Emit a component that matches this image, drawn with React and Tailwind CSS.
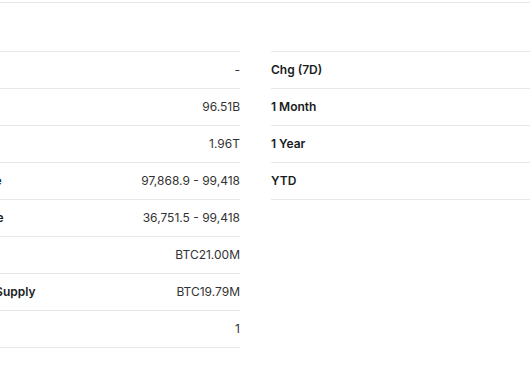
import React from "react";

const left = [
  ["Prev. Close", "-"],
  ["Volume", "96.51B"],
  ["Market Cap", "1.96T"],
  ["Day's Range", "97,868.9 - 99,418"],
  ["52 wk Range", "36,751.5 - 99,418"],
  ["Max Supply", "BTC21.00M"],
  ["Circulating Supply", "BTC19.79M"],
  ["Rank", "1"],
];

const right = [
  ["Chg (7D)", "+8.12%"],
  ["1 Month", "+42.19%"],
  ["1 Year", "+167.45%"],
  ["YTD", "+135.08%"],
];

function Row({ label, value }) {
  return (
    <div className="flex h-[37px] items-center justify-between border-b border-[#e6e9eb]">
      <span className="font-semibold text-[#181c21] whitespace-nowrap">{label}</span>
      <span className="text-[#333] whitespace-nowrap">{value}</span>
    </div>
  );
}

export default function App() {
  return (
    <div
      className="w-[530px] h-[367px] overflow-hidden bg-white text-[12px] leading-4"
      style={{ fontFamily: "Inter, 'Noto Sans', sans-serif" }}
    >
      <div className="mt-[2px] border-t border-[#e6e9eb] -mr-[200px]">
        <div className="-ml-[71px] mt-[48px] grid grid-cols-[311px_400px] gap-x-[31px]">
          <div className="border-t border-[#e6e9eb]">
            {left.map(([l, v]) => (
              <Row key={l} label={l} value={v} />
            ))}
          </div>
          <div className="border-t border-[#e6e9eb] self-start">
            {right.map(([l, v]) => (
              <Row key={l} label={l} value={v} />
            ))}
          </div>
        </div>
      </div>
    </div>
  );
}
